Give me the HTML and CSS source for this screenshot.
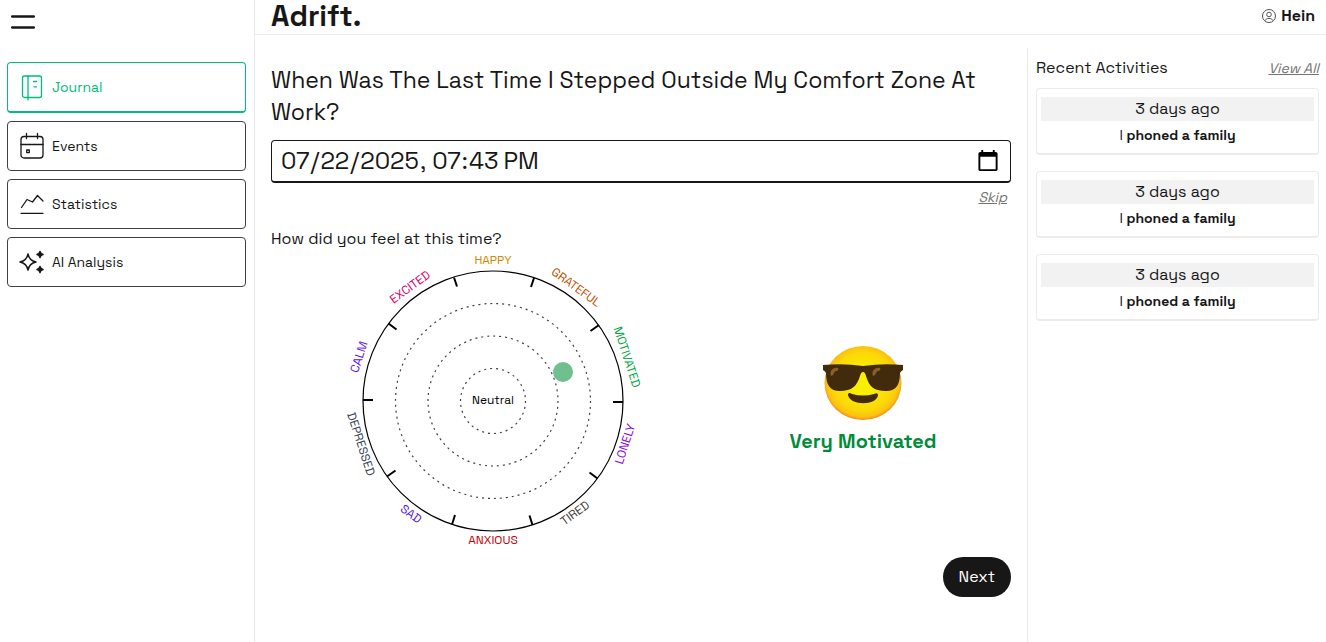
FILE: index.html
```html
<!DOCTYPE html>
<html lang="en">
<head>
<meta charset="utf-8">
<meta name="viewport" content="width=device-width, initial-scale=1">
<title>Adrift.</title>
<link rel="stylesheet" href="styles.css">
</head>
<body>
<div class="app">
  <nav class="sidebar">
    <button class="menu" aria-label="Menu">
      <svg width="24" height="16" viewBox="0 0 24 16"><path d="M1.2 2.5H22.8M1.2 13.5H22.8" stroke="#171717" stroke-width="2.6" stroke-linecap="round"/></svg>
    </button>
    <div class="nav-list">
      <a class="nav-item active" href="#">
        <svg class="icon" viewBox="0 0 24 28"><rect x="2.500" y="3" width="19" height="21.500" rx="2"/><path d="M8 3v24M13.500 8.500h3M14 13.800h2.500"/></svg>
        Journal</a>
      <a class="nav-item" href="#">
        <svg class="icon" viewBox="0 0 24 28"><rect x="1" y="4.500" width="22" height="21.500" rx="3"/><path d="M1 12.500h22M6.500 1.500v5M17.500 1.500v5M6.700 18h2.600v2.600h-2.600z"/></svg>
        Events</a>
      <a class="nav-item" href="#">
        <svg class="icon" viewBox="0 0 24 28"><path d="M1.500 17.500l5.500-8 5.500 2.500L17.500 5.500l5.500 5.500M1 23.300h22"/></svg>
        Statistics</a>
      <a class="nav-item" href="#">
        <svg class="icon sparkle" viewBox="0 0 24 28"><path d="M8 6c1 5 3 7 8 8-5 1-7 3-8 8-1-5-3-7-8-8 5-1 7-3 8-8z"/><path d="M20 3.500q.5 2.500 3 3-2.500.5-3 3-.5-2.500-3-3 2.500-.5 3-3zM20 18.500q.5 2.500 3 3-2.500.5-3 3-.5-2.500-3-3 2.500-.5 3-3z" fill="currentColor"/></svg>
        AI Analysis</a>
    </div>
  </nav>

  <header class="topbar">
    <h1 class="brand">Adrift.</h1>
    <a class="user" href="#">
      <svg width="16" height="16" viewBox="0 0 16 16" fill="none" stroke="#525252"><circle cx="8" cy="8" r="6.500"/><circle cx="8" cy="6.500" r="2.300"/><path d="M3.800 12.700c1-1.700 2.500-2.200 4.200-2.200s3.200.5 4.200 2.200"/></svg>
      Hein</a>
  </header>

  <main class="content">
    <label class="question" for="when">When Was The Last Time I Stepped Outside My Comfort Zone At Work?</label>
    <input class="when" id="when" type="datetime-local" value="2025-07-22T19:43">
    <a class="skip" href="#">Skip</a>
    <p class="feel">How did you feel at this time?</p>
    <div class="mood">
      <svg class="wheel" viewBox="343 251 300 300" role="img" aria-label="Mood wheel">
        <circle class="rim" cx="493" cy="401" r="130"/>
        <g class="rings">
          <circle cx="493" cy="401" r="97.500"/>
          <circle cx="493" cy="401" r="65"/>
          <circle cx="493" cy="401" r="32.500"/>
        </g>
        <path class="ticks" d="M534 278l-3 9M599 325l-8.500 6M623 402h-10M597.500 478.500l-8-6M532.500 525l-3-9.500M452 524.500l3-9.500M387 476.500l8.500-6M363 400h10M388.500 323.500l8 6M454 277.500l3 9"/>
        <circle class="knob" cx="563" cy="372" r="10"/>
        <g class="names">
          <text class="neutral" x="493" y="404">Neutral</text>
          <text fill="#d08700" x="493" y="264">HAPPY</text>
          <text fill="#bb4d00" transform="translate(576 287) rotate(36)" y="4">GRATEFUL</text>
          <text fill="#00a63e" transform="translate(627 357) rotate(72)" y="4">MOTIVATED</text>
          <text fill="#8200db" transform="translate(625 444) rotate(-72)" y="4">LONELY</text>
          <text fill="#44403b" transform="translate(575 513) rotate(-36)" y="4">TIRED</text>
          <text fill="#c10007" x="493" y="544">ANXIOUS</text>
          <text fill="#4f11e0" transform="translate(411 514) rotate(36)" y="4">SAD</text>
          <text fill="#314158" transform="translate(361 444) rotate(72)" y="4">DEPRESSED</text>
          <text fill="#5d0ef0" transform="translate(359 357) rotate(-72)" y="4">CALM</text>
          <text fill="#d6006b" transform="translate(410 287) rotate(-36)" y="4">EXCITED</text>
        </g>
      </svg>
      <div class="result">
        <svg class="emoji" viewBox="0 0 80 76" aria-hidden="true">
          <defs><radialGradient id="face" cx=".5" cy=".48" r=".52"><stop offset=".3" stop-color="#f9f000"/><stop offset=".75" stop-color="#fbd808"/><stop offset=".92" stop-color="#fbc110"/><stop offset="1" stop-color="#f18a1a"/></radialGradient></defs>
          <ellipse cx="40" cy="38" rx="38.500" ry="37" fill="url(#face)"/>
          <path d="M0 20q20-2 40 1 20-3 40-1v5q-2 1-3 3c0 12-4 18-14 18-13 0-17-5-20-15q-1-4-3-4t-3 4c-3 10-8 15-20 15C7 46 3 40 3 28q-1-2-3-3z" fill="#422b0d"/>
          <path d="M8 31c-2-5 2-9 7-8 1 1 0 3-2 3-3 1-1 4-5 5zM50 31c-2-5 2-9 7-8 1 1 0 3-2 3-3 1-1 4-5 5z" fill="#896024"/>
          <path d="M25 49q1-2 4 0 11 3 22 0 4-2 4 1c-1 11-28 11-30 0z" fill="#422b0d"/>
        </svg>
        <strong class="verdict">Very Motivated</strong>
      </div>
    </div>
    <button class="next">Next</button>
  </main>

  <aside class="recent">
    <div class="recent-head"><h2>Recent Activities</h2><a href="#">View All</a></div>
    <article class="card"><p class="ago">3 days ago</p><p class="did">I <b>phoned a family</b></p></article>
    <article class="card"><p class="ago">3 days ago</p><p class="did">I <b>phoned a family</b></p></article>
    <article class="card"><p class="ago">3 days ago</p><p class="did">I <b>phoned a family</b></p></article>
  </aside>
</div>
</body>
</html>
```
FILE: styles.css
```css
* { box-sizing: border-box; margin: 0; }
body { font: 16px/24px "Space Grotesk", Inter, sans-serif; color: #171717; background: #fff; }
a { color: inherit; text-decoration: none; }
button, input { font: inherit; color: inherit; }

.app {
  display: grid;
  grid-template: "side top top" auto "side main recent" 1fr / 255px 1fr 299px;
  min-height: 100vh;
}

.sidebar { grid-area: side; border-right: 1px solid #ebebeb; padding: 14px 8px 14px 7px; }
.menu { display: block; border: 0; background: none; padding: 0 4px; height: 16px; }
.menu svg { display: block; }
.nav-list { display: flex; flex-direction: column; gap: 8px; margin-top: 32px; }
.nav-item {
  display: flex; align-items: center; gap: 8px;
  height: 50px; padding: 0 12px;
  border: 1px solid #404040; border-radius: 4px;
  font-size: 14px;
}
.nav-item.active { height: 51px; color: #00bc7d; border-color: #00bc7d; border-bottom-width: 2px; }
.icon { width: 24px; height: 28px; fill: none; stroke: currentColor; stroke-width: 1.3; stroke-linecap: round; stroke-linejoin: round; overflow: visible; }
.sparkle { stroke-width: 1.5; }

.topbar {
  grid-area: top;
  display: flex; justify-content: space-between; align-items: center;
  padding: 0 11px 2px 16px;
  border-bottom: 1px solid #ebebeb;
}
.brand { font-size: 29px; line-height: 32px; font-weight: 700; }
.user { display: flex; align-items: center; gap: 4px; font-weight: 600; }

.content { grid-area: main; padding: 29px 16px; display: flex; flex-direction: column; }
.question { font-size: 23px; line-height: 32px; }
.when {
  width: 100%; height: 43px; margin-top: 12px; padding: 0 8px;
  font-size: 24px; background: #fff;
  border: 1px solid #171717; border-bottom-width: 2px; border-radius: 4px; outline: 0;
}
.skip { align-self: flex-end; margin: 4px 4px 0 0; font-size: 14px; line-height: 20px; }
.skip, .recent-head a { font-style: italic; text-decoration: underline; color: #737373; }
.feel { margin-top: 20px; }
.mood { display: grid; grid-template-columns: 3fr 2fr; align-items: center; }
.wheel { width: 300px; justify-self: center; overflow: visible; }
.rim { fill: none; stroke: #000; stroke-width: 1.2; }
.rings { fill: none; stroke: #404040; stroke-width: 1.2; stroke-dasharray: 2 4; }
.ticks { fill: none; stroke: #000; stroke-width: 2; }
.knob { fill: #6fbf8f; }
.names { font-size: 12px; text-anchor: middle; }
.neutral { fill: #000; }
.result { display: flex; flex-direction: column; align-items: center; gap: 6px; padding-bottom: 2px; }
.emoji { width: 80px; height: 76px; }
.verdict { font-size: 20px; line-height: 28px; font-weight: 600; color: #008c3a; }
.next {
  align-self: flex-end; height: 40px; margin-top: 6px; padding: 0 16px;
  border: 0; border-radius: 20px; background: #171717; color: #fff;
}

.recent {
  grid-area: recent; margin-top: 13px; padding: 8px 7px 8px 8px;
  border-left: 1px solid #ebebeb;
  display: flex; flex-direction: column; gap: 16px;
}
.recent-head { display: flex; justify-content: space-between; align-items: center; margin-bottom: -8px; }
.recent-head h2 { font-size: 16px; font-weight: 400; }
.recent-head a { font-size: 14px; }
.card {
  padding: 8px 4px; text-align: center;
  border: 1px solid #ebebeb; border-bottom-width: 2px; border-radius: 4px;
}
.ago { background: #f2f2f2; }
.did { margin-top: 4px; font-size: 14px; line-height: 20px; }
.did b { font-weight: 600; }
```
